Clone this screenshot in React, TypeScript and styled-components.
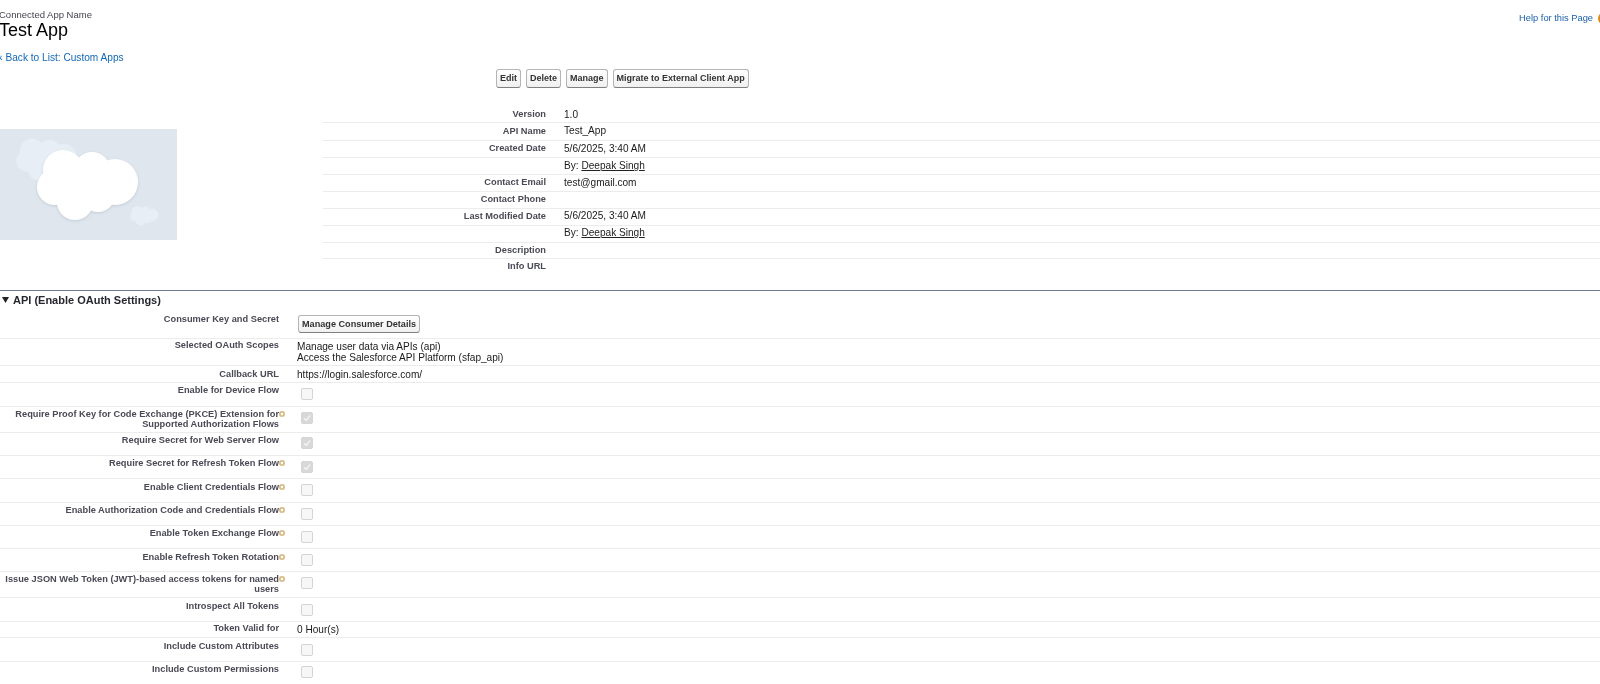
import React from "react";
import styled, { createGlobalStyle } from "styled-components";

const Global = createGlobalStyle`
  html, body { margin: 0; padding: 0; background: #fff; }
  body { font-family: "Liberation Sans", Arial, sans-serif; color: #000; }
`;

const Page = styled.div`
  width: 1600px;
  height: 684px;
  overflow: hidden;
  background: #fff;
  filter: blur(0.4px);
`;

const Header = styled.header`
  display: flex;
  justify-content: space-between;
  align-items: flex-start;
  height: 51px;
  padding-top: 10px;
  box-sizing: border-box;
`;

const TitleBlock = styled.div`
  margin-left: -1px;
`;

const Eyebrow = styled.div`
  font-size: 9.5px;
  line-height: 10px;
  color: #44444e;
`;

const Title = styled.h1`
  margin: 0;
  font-size: 18px;
  line-height: 20px;
  font-weight: 400;
  color: #000;
`;

const HelpLink = styled.a`
  display: flex;
  align-items: center;
  gap: 5px;
  margin-top: 2px;
  margin-right: -11px;
  font-size: 9.3px;
  line-height: 13px;
  color: #1b5faa;
`;

const HelpBadge = styled.span`
  display: block;
  width: 13px;
  height: 13px;
  border-radius: 50%;
  background: #e08a12;
`;

const BackLink = styled.a`
  display: block;
  height: 13px;
  margin-left: -3px;
  line-height: 13px;
  font-size: 10.15px;
  color: #1468b4;
`;

const ButtonBar = styled.div`
  display: flex;
  gap: 5px;
  margin-top: 5px;
  padding-left: 496px;
`;

const Button = styled.button`
  height: 19px;
  padding: 0 3px;
  border: 1px solid #b5b5b5;
  border-bottom-color: #7f7f7f;
  border-radius: 3px;
  background: linear-gradient(#fff, #f0f0f0);
  font-family: inherit;
  font-size: 9px;
  font-weight: 700;
  line-height: 17px;
  color: #333;
  white-space: nowrap;
`;

const DetailWrap = styled.section`
  display: flex;
  height: 185px;
  margin-top: 17px;
  border-bottom: 1px solid #6d7a92;
`;

const ImagePane = styled.div`
  flex: 0 0 323px;
  padding-top: 24px;
`;

const LogoSvg = styled.svg`
  display: block;
  width: 177px;
  height: 111px;
`;

const DetailTable = styled.div`
  flex: 1;
`;

const DetailRow = styled.div<{ $h: number; $last?: boolean }>`
  display: grid;
  grid-template-columns: 223px 1fr;
  column-gap: 18px;
  height: ${(p) => p.$h}px;
  box-sizing: border-box;
  border-bottom: ${(p) => (p.$last ? "0" : "1px solid #ececec")};
`;

const Label = styled.div<{ $top: number }>`
  position: relative;
  padding-top: ${(p) => p.$top}px;
  text-align: right;
  font-size: 9.25px;
  font-weight: 700;
  line-height: 10px;
  color: #4a4a56;
`;

const Value = styled.div<{ $top: number }>`
  padding-top: ${(p) => p.$top}px;
  font-size: 10.1px;
  line-height: 11px;
  color: #1a1a1a;
`;

const UserLink = styled.a`
  color: #222;
  text-decoration: underline;
`;

const SectionHeading = styled.h3`
  display: flex;
  align-items: center;
  gap: 4px;
  height: 18px;
  margin: 0;
  padding-left: 2px;
  font-size: 11px;
  font-weight: 700;
  color: #27282e;
`;

const Caret = styled.svg`
  width: 7px;
  height: 6px;
  flex: none;
`;

const OAuthRow = styled.div<{ $h: number }>`
  display: grid;
  grid-template-columns: 279px 1fr;
  column-gap: 18px;
  height: ${(p) => p.$h}px;
  box-sizing: border-box;
  border-bottom: 1px solid #ececec;
`;

const InfoDot = styled.span<{ $top: number }>`
  position: absolute;
  right: -6px;
  top: ${(p) => p.$top}px;
  width: 6px;
  height: 6px;
  border-radius: 50%;
  background: #d9bd8b;
  box-shadow: inset 0 0 0 1.8px #d9bd8b, inset 0 0 0 3px #fff;
`;

const CheckCell = styled.div<{ $top: number }>`
  padding-top: ${(p) => p.$top}px;
  padding-left: 4px;
`;

const Checkbox = styled.span<{ $checked?: boolean }>`
  display: flex;
  align-items: center;
  justify-content: center;
  width: 12px;
  height: 12px;
  box-sizing: border-box;
  border: 1px solid ${(p) => (p.$checked ? "#d6d6d6" : "#d4d4d4")};
  border-radius: 2px;
  background: ${(p) => (p.$checked ? "#d8d8d8" : "#f7f7f7")};
`;

const CheckMark = styled.svg`
  width: 10px;
  height: 10px;
  fill: none;
  stroke: #f2f2f2;
  stroke-width: 1.6;
`;

const ManageButton = styled(Button)`
  margin-left: 1px;
  height: 18px;
  font-size: 9.15px;
`;

const Cloud = ({ x, y, s, fill, filter }: { x: number; y: number; s: number; fill: string; filter?: string }) => (
  <g transform={`translate(${x} ${y}) scale(${s})`} fill={fill} filter={filter}>
    <circle cx="-23" cy="3" r="18" />
    <circle cx="-15" cy="-14" r="20" />
    <circle cx="14" cy="-14" r="18" />
    <circle cx="37" cy="-2" r="23" />
    <circle cx="-3" cy="18" r="18" />
    <circle cx="20" cy="11" r="17" />
    <rect x="-20" y="-14" width="50" height="30" />
  </g>
);

const Logo = () => (
  <LogoSvg viewBox="0 0 177 111" aria-hidden="true">
    <defs>
      <filter id="soft" x="-20%" y="-20%" width="140%" height="140%">
        <feDropShadow dx="0" dy="1" stdDeviation="1.5" floodColor="#8a97a8" floodOpacity="0.35" />
      </filter>
    </defs>
    <rect width="177" height="111" fill="#dfe6ee" />
    <Cloud x={41} y={30} s={0.6} fill="#e8eef5" />
    <Cloud x={141.5} y={86.5} s={0.28} fill="#e8eef5" />
    <Cloud x={78} y={55} s={1} fill="#ffffff" filter="url(#soft)" />
  </LogoSvg>
);

const details: { label: string; value?: React.ReactNode; h: number; lt: number; vt: number }[] = [
  { label: "Version", value: "1.0", h: 18, lt: 4, vt: 4 },
  { label: "API Name", value: "Test_App", h: 18, lt: 3, vt: 2 },
  { label: "Created Date", value: "5/6/2025, 3:40 AM", h: 17, lt: 2, vt: 2 },
  { label: "", value: <>By: <UserLink>Deepak Singh</UserLink></>, h: 17, lt: 3, vt: 2 },
  { label: "Contact Email", value: "test@gmail.com", h: 17, lt: 2, vt: 2 },
  { label: "Contact Phone", h: 17, lt: 2, vt: 3 },
  { label: "Last Modified Date", value: "5/6/2025, 3:40 AM", h: 17, lt: 2, vt: 1 },
  { label: "", value: <>By: <UserLink>Deepak Singh</UserLink></>, h: 17, lt: 3, vt: 1 },
  { label: "Description", h: 16, lt: 2, vt: 3 },
  { label: "Info URL", h: 16, lt: 2, vt: 3 },
];

type Row = {
  label: React.ReactNode;
  h: number;
  lt: number;
  info?: boolean;
  cb?: number;
  checked?: boolean;
  vt?: number;
  value?: React.ReactNode;
};

const rows: Row[] = [
  { label: "Consumer Key and Secret", h: 30, lt: 5, vt: 6, value: <ManageButton>Manage Consumer Details</ManageButton> },
  { label: "Selected OAuth Scopes", h: 27, lt: 1, vt: 2, value: <>Manage user data via APIs (api)<br />Access the Salesforce API Platform (sfap_api)</> },
  { label: "Callback URL", h: 17, lt: 3, vt: 3, value: "https://login.salesforce.com/" },
  { label: "Enable for Device Flow", h: 24, lt: 2, cb: 5 },
  { label: "Require Proof Key for Code Exchange (PKCE) Extension for Supported Authorization Flows", h: 26, lt: 2, cb: 5, info: true, checked: true },
  { label: "Require Secret for Web Server Flow", h: 23, lt: 2, cb: 4, checked: true },
  { label: "Require Secret for Refresh Token Flow", h: 23, lt: 2, cb: 5, info: true, checked: true },
  { label: "Enable Client Credentials Flow", h: 24, lt: 3, cb: 5, info: true },
  { label: "Enable Authorization Code and Credentials Flow", h: 23, lt: 2, cb: 5, info: true },
  { label: "Enable Token Exchange Flow", h: 23, lt: 2, cb: 5, info: true },
  { label: "Enable Refresh Token Rotation", h: 23, lt: 3, cb: 5, info: true },
  { label: "Issue JSON Web Token (JWT)-based access tokens for named users", h: 26, lt: 2, cb: 5, info: true },
  { label: "Introspect All Tokens", h: 24, lt: 3, cb: 6 },
  { label: "Token Valid for", h: 16, lt: 1, vt: 2, value: "0 Hour(s)" },
  { label: "Include Custom Attributes", h: 24, lt: 3, cb: 6 },
  { label: "Include Custom Permissions", h: 24, lt: 2, cb: 4 },
];

export default function App() {
  return (
    <Page>
      <Global />
      <Header>
        <TitleBlock>
          <Eyebrow>Connected App Name</Eyebrow>
          <Title>Test App</Title>
        </TitleBlock>
        <HelpLink>
          Help for this Page
          <HelpBadge />
        </HelpLink>
      </Header>
      <BackLink>« Back to List: Custom Apps</BackLink>
      <ButtonBar>
        <Button>Edit</Button>
        <Button>Delete</Button>
        <Button>Manage</Button>
        <Button>Migrate to External Client App</Button>
      </ButtonBar>
      <DetailWrap>
        <ImagePane>
          <Logo />
        </ImagePane>
        <DetailTable>
          {details.map((d, i) => (
            <DetailRow key={i} $h={d.h} $last={i === details.length - 1}>
              <Label $top={d.lt}>{d.label}</Label>
              <Value $top={d.vt}>{d.value}</Value>
            </DetailRow>
          ))}
        </DetailTable>
      </DetailWrap>
      <SectionHeading>
        <Caret viewBox="0 0 7 6" aria-hidden="true">
          <path d="M0 0h7L3.5 6z" fill="#222" />
        </Caret>
        API (Enable OAuth Settings)
      </SectionHeading>
      {rows.map((r, i) => (
        <OAuthRow key={i} $h={r.h}>
          <Label $top={r.lt}>
            {r.label}
            {r.info && <InfoDot $top={r.lt + 2} />}
          </Label>
          {r.cb !== undefined ? (
            <CheckCell $top={r.cb}>
              <Checkbox $checked={r.checked}>
                {r.checked && (
                  <CheckMark viewBox="0 0 10 10" aria-hidden="true">
                    <path d="M2 5.2 4.2 7.4 8 2.6" />
                  </CheckMark>
                )}
              </Checkbox>
            </CheckCell>
          ) : (
            <Value $top={r.vt ?? 3}>{r.value}</Value>
          )}
        </OAuthRow>
      ))}
    </Page>
  );
}
